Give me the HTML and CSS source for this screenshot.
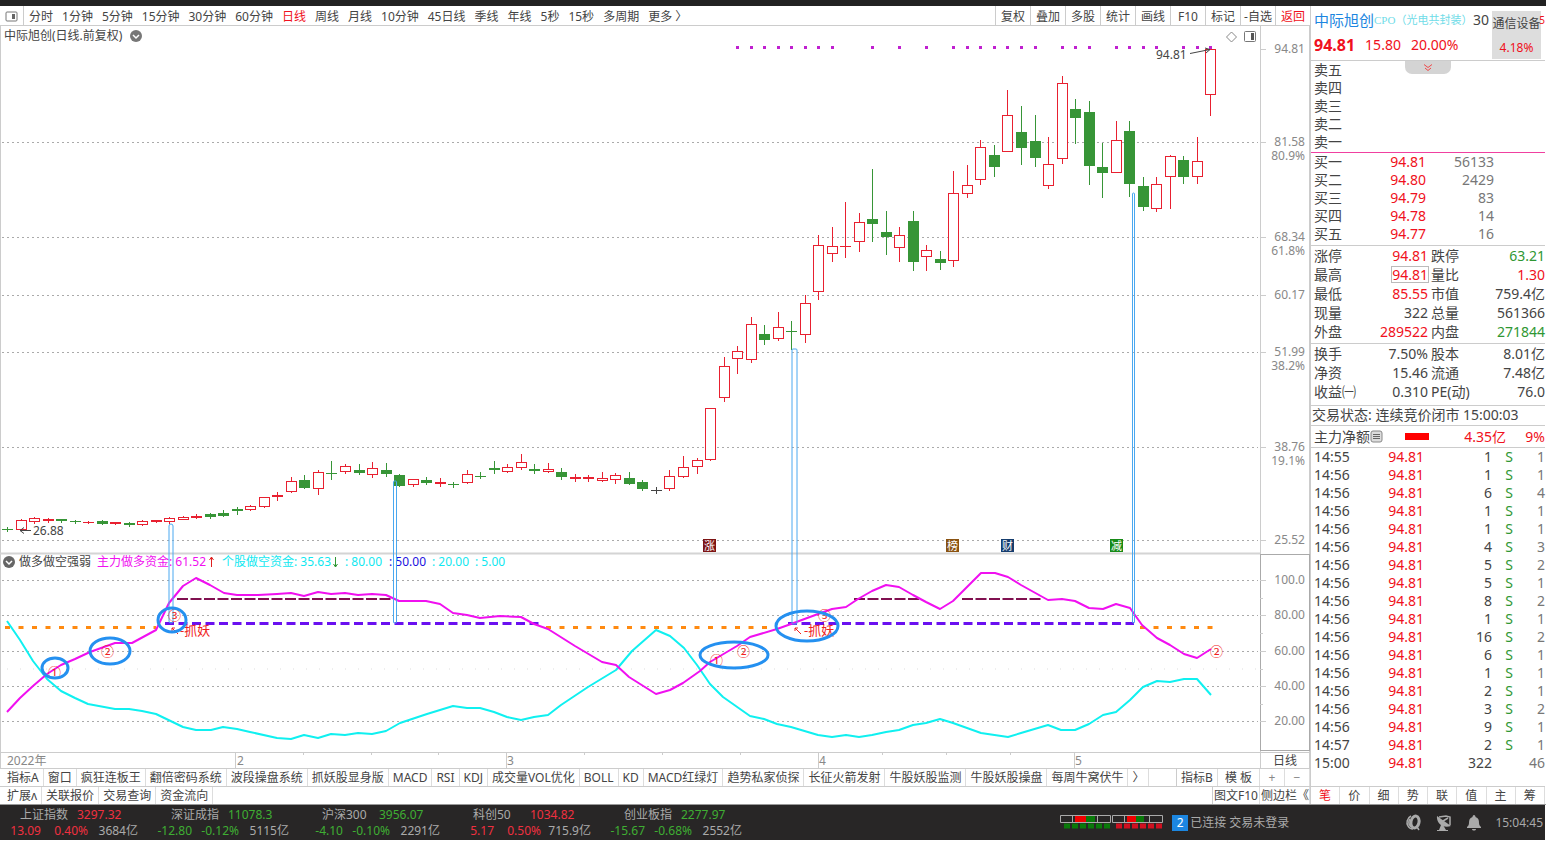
FILE: index.html
```html
<!DOCTYPE html>
<html lang="zh-CN">
<head>
    <meta charset="UTF-8">
    <meta name="viewport" content="width=device-width, initial-scale=1.0">
    <title>中际旭创 日线</title>
    <link rel="stylesheet" href="styles.css">
</head>
<body>
    <div class="workspace">
        <main class="chart-pane">
            <nav class="toolbar">
                <button class="layout-btn" aria-label="布局">
                    <svg width="13" height="11" viewBox="0 0 13 11"><rect x="1" y="1" width="11" height="9" rx="1" fill="none" stroke="#777"/><rect x="7" y="3" width="3" height="5" fill="#666"/></svg>
                </button>
                <div class="periods">
                    <button>分时</button>
                    <button>1分钟</button>
                    <button>5分钟</button>
                    <button>15分钟</button>
                    <button>30分钟</button>
                    <button>60分钟</button>
                    <button class="active">日线</button>
                    <button>周线</button>
                    <button>月线</button>
                    <button>10分钟</button>
                    <button>45日线</button>
                    <button>季线</button>
                    <button>年线</button>
                    <button>5秒</button>
                    <button>15秒</button>
                    <button>多周期</button>
                    <button>更多 〉</button>
                </div>
                <div class="tools">
                    <button>复权</button>
                    <button>叠加</button>
                    <button>多股</button>
                    <button>统计</button>
                    <button>画线</button>
                    <button>F10</button>
                    <button>标记</button>
                    <button>-自选</button>
                    <button class="active">返回</button>
                </div>
            </nav>

            <svg class="chart" id="chart" viewBox="0 26 1310 742">
                <g class="grid">
                    <path d="M2 142.5H1258M2 237.5H1258M2 295.5H1258M2 352.5H1258M2 447.5H1258M2 540.5H1258"/>
                    <path d="M2 580.5H1258M2 615.5H1258M2 651.5H1258M2 686.5H1258M2 721.5H1258"/>
                </g>
                <path class="grid-mid" d="M7 669H1258"/>
                <path class="frame" d="M0.5 26V768M1260.5 26V768M0 752.5H1310M1309.5 26V768"/>
                <path class="divider" d="M0 553.5H1260"/>
                <rect class="axis-box" x="1260.5" y="554.5" width="49" height="196"/>
                <path class="ticks" d="M1260 49.5h6M1260 142.5h6M1260 237.5h6M1260 295.5h6M1260 352.5h6M1260 447.5h6M1260 540.5h6M1260 580.5h6M1260 615.5h6M1260 651.5h6M1260 686.5h6M1260 721.5h6M1260 598.5h3M1260 633.5h3M1260 669.5h3M1260 704.5h3"/>
                <path class="ticks" d="M235.5 752v16M506.5 752v16M818.5 752v16M1074.5 752v16M303.5 752v3M371.5 752v3M438.5 752v3M584.5 752v3M662.5 752v3M740.5 752v3M882.5 752v3M946.5 752v3M1010.5 752v3"/>

                <g class="axis-text">
                    <text x="1305" y="53">94.81</text>
                    <text x="1305" y="146">81.58</text>
                    <text x="1305" y="160">80.9%</text>
                    <text x="1305" y="241">68.34</text>
                    <text x="1305" y="255">61.8%</text>
                    <text x="1305" y="299">60.17</text>
                    <text x="1305" y="356">51.99</text>
                    <text x="1305" y="370">38.2%</text>
                    <text x="1305" y="451">38.76</text>
                    <text x="1305" y="465">19.1%</text>
                    <text x="1305" y="544">25.52</text>
                    <text x="1305" y="584">100.0</text>
                    <text x="1305" y="619">80.00</text>
                    <text x="1305" y="655">60.00</text>
                    <text x="1305" y="690">40.00</text>
                    <text x="1305" y="725">20.00</text>
                </g>
                <g class="month-text">
                    <text x="7" y="765">2022年</text>
                    <text x="237" y="765">2</text>
                    <text x="507" y="765">3</text>
                    <text x="819" y="765">4</text>
                    <text x="1075" y="765">5</text>
                </g>
                <text class="dark" x="1273" y="765">日线</text>

                <text class="dark" x="4" y="40">中际旭创(日线.前复权)</text>
                <circle cx="136" cy="36" r="6" fill="#777"/>
                <path d="M133 35l3 3 3-3" fill="none" stroke="#fff" stroke-width="1.5"/>
                <path d="M1231.5 32l5 5-5 5-5-5z" fill="none" stroke="#888"/>
                <rect x="1244.5" y="31.5" width="11" height="10" rx="1" fill="none" stroke="#777"/>
                <rect x="1251" y="33" width="3" height="7" fill="#555"/>

                <g id="signals"></g>
                <g id="candles"></g>

                <text class="price-mark" x="33" y="535">26.88</text>
                <path class="arrow" d="M31 530.5H20M24 527.5l-4 3 4 3"/>
                <text class="price-mark" x="1156" y="59">94.81</text>
                <path class="arrow" d="M1190 53.5L1210 49.5M1205 48l5 1.500-4 3.500"/>

                <g class="event">
                    <rect x="703" y="539" width="13" height="13" fill="#7d1414"/><text x="709.5" y="550">涨</text>
                    <rect x="946" y="539" width="13" height="13" fill="#8a5312"/><text x="952.5" y="550">榜</text>
                    <rect x="1001" y="539" width="13" height="13" fill="#163d6e"/><text x="1007.5" y="550">财</text>
                    <rect x="1110" y="539" width="13" height="13" fill="#178a17"/><text x="1116.5" y="550">减</text>
                </g>

                <circle cx="9" cy="562" r="6" fill="#666"/>
                <path d="M6 561l3 3 3-3" fill="none" stroke="#fff" stroke-width="1.5"/>
                <text class="dark" x="19" y="566">做多做空强弱</text>
                <text class="long" x="97" y="566">主力做多资金: 61.52</text>
                <path d="M211.500 567V557M209.500 560l2-3 2 3" fill="none" stroke="#e02020"/>
                <text class="short" x="222" y="566">个股做空资金: 35.63</text>
                <path d="M335.500 557v10M333.500 564l2 3 2-3" fill="none" stroke="#2f9733"/>
                <text class="short" x="345" y="566">: 80.00</text>
                <text class="mid" x="389" y="566">: 50.00</text>
                <text class="short" x="432" y="566">: 20.00</text>
                <text class="short" x="475" y="566">: 5.00</text>

                <path class="dash-orange" d="M5 627.500H156M546 627.500H770M1140 627.500H1215"/>
                <path class="dash-purple" d="M165 623.500H541M788 623.500H1134"/>
                <path class="dash-wine" d="M177 599H391M854 599H920M962 599H1041"/>
                <polyline class="line-short" points="7,621 20,640 33,661 47,679 61,691 75,698 88,704 115,709 129,709 142,711 156,714 183,727 196,730 211,730 223,727 237,729 250,732 277,738 291,739 304,735 318,738 331,734 345,735 358,733 372,734 386,731 400,723 427,714 453,706 467,708 480,708 494,712 507,717 521,720 534,717 548,715 561,705 588,687 616,670 632,651 656,630 670,636 684,648 697,665 710,684 723,697 750,716 764,719 777,724 791,727 818,735 832,737 846,735 859,737 872,735 886,732 899,730 913,725 926,723 940,719 953,723 967,728 981,733 1008,737 1021,733 1048,725 1061,730 1075,730 1089,724 1103,715 1116,712 1130,700 1143,687 1157,681 1170,682 1184,679 1197,679 1211,695"/>
                <polyline class="line-long" points="7,712 20,698 33,686 47,674 61,665 75,659 90,652 115,643 132,643 156,630 169,603 183,586 196,578 210,585 224,593 237,595 258,595 277,594 291,593 304,596 318,592 331,594 345,593 358,595 372,594 386,595 399,601 426,601 440,604 453,613 467,615 480,618 500,616 521,617 534,624 548,629 575,646 602,662 616,665 629,677 656,694 670,690 683,683 700,671 710,662 737,646 750,637 777,629 791,624 818,614 832,609 846,607 858,599 872,591 886,585 899,587 913,595 926,602 940,609 953,601 967,587 981,573 995,573 1008,577 1021,585 1048,600 1062,599 1075,601 1089,608 1103,609 1116,604 1130,608 1142,625 1157,638 1170,645 1184,654 1197,658 1211,649"/>

                <g class="pins">
                    <rect x="169" y="524" width="4" height="99" rx="2"/>
                    <rect x="393.500" y="481" width="3" height="142" rx="1"/>
                    <rect x="792" y="349" width="5" height="275" rx="1"/>
                    <rect x="1132.500" y="193" width="2" height="430" rx="1"/>
                </g>
                <g class="signal-text">
                    <text x="48" y="677">①</text>
                    <text x="101" y="656">②</text>
                    <text x="168" y="620">③</text>
                    <text x="180" y="635">-抓妖</text>
                    <text x="710" y="665">①</text>
                    <text x="737" y="656">②</text>
                    <text x="818" y="620">③</text>
                    <text x="804" y="635">-抓妖</text>
                    <text x="1210" y="656">②</text>
                </g>
                <path class="signal-arrow" d="M178 634l-6-6M172 631v-3h3M801 634l-6-6M795 631v-3h3"/>
                <g class="rings">
                    <ellipse cx="55" cy="668" rx="13" ry="10"/>
                    <ellipse cx="110" cy="651" rx="20" ry="13"/>
                    <ellipse cx="172" cy="620" rx="14" ry="12"/>
                    <ellipse cx="734" cy="655" rx="34" ry="13"/>
                    <ellipse cx="807" cy="626" rx="31" ry="15"/>
                </g>
            </svg>

            <div class="tab-row">
                <button>指标A</button>
                <button>窗口</button>
                <button>疯狂连板王</button>
                <button>翻倍密码系统</button>
                <button>波段操盘系统</button>
                <button>抓妖股显身版</button>
                <button>MACD</button>
                <button>RSI</button>
                <button>KDJ</button>
                <button>成交量VOL优化</button>
                <button>BOLL</button>
                <button>KD</button>
                <button>MACD红绿灯</button>
                <button>趋势私家侦探</button>
                <button>长征火箭发射</button>
                <button>牛股妖股监测</button>
                <button>牛股妖股操盘</button>
                <button>每周牛窝伏牛</button>
                <button>〉</button>
                <span class="spacer"></span>
                <button>指标B</button>
                <button class="template">模 板</button>
                <button class="zoom-btn">+</button>
                <button class="zoom-btn">−</button>
            </div>
            <div class="tab-row">
                <button>扩展ʌ</button>
                <button>关联报价</button>
                <button>交易查询</button>
                <button>资金流向</button>
                <span class="spacer"></span>
                <button class="slim">图文F10</button>
                <button class="side-toggle">侧边栏《</button>
            </div>
        </main>

        <aside class="quote">
            <header class="quote-head">
                <div class="quote-main">
                    <div class="name-line">
                        <a class="stock-name" href="#">中际旭创</a><span class="concept">CPO（光电共封装）</span><span class="code">30</span>
                    </div>
                    <div class="price-line">
                        <strong>94.81</strong><span>15.80</span><span>20.00%</span>
                    </div>
                </div>
                <div class="sector"><span>通信设备</span><span class="up">4.18%</span></div>
                <span class="code-tail">5</span>
                <button class="collapse" aria-label="收起">
                    <svg width="10" height="8" viewBox="0 0 10 8"><path d="M1 0.500l4 3 4-3M2 4l3 2.500 3-2.500" fill="none" stroke="#f04848"/></svg>
                </button>
            </header>

            <table class="book sell">
                <tr><th>卖五</th><td></td><td></td></tr>
                <tr><th>卖四</th><td></td><td></td></tr>
                <tr><th>卖三</th><td></td><td></td></tr>
                <tr><th>卖二</th><td></td><td></td></tr>
                <tr><th>卖一</th><td></td><td></td></tr>
            </table>
            <table class="book buy">
                <tr><th>买一</th><td class="up">94.81</td><td class="vol">56133</td></tr>
                <tr><th>买二</th><td class="up">94.80</td><td class="vol">2429</td></tr>
                <tr><th>买三</th><td class="up">94.79</td><td class="vol">83</td></tr>
                <tr><th>买四</th><td class="up">94.78</td><td class="vol">14</td></tr>
                <tr><th>买五</th><td class="up">94.77</td><td class="vol">16</td></tr>
            </table>
            <table class="stats">
                <tr><th>涨停</th><td class="up">94.81</td><th>跌停</th><td class="down">63.21</td></tr>
                <tr><th>最高</th><td class="up"><span class="boxed">94.81</span></td><th>量比</th><td class="up">1.30</td></tr>
                <tr><th>最低</th><td class="up">85.55</td><th>市值</th><td>759.4亿</td></tr>
                <tr><th>现量</th><td>322</td><th>总量</th><td>561366</td></tr>
                <tr><th>外盘</th><td class="up">289522</td><th>内盘</th><td class="down">271844</td></tr>
            </table>
            <table class="stats finance">
                <tr><th>换手</th><td>7.50%</td><th>股本</th><td>8.01亿</td></tr>
                <tr><th>净资</th><td>15.46</td><th>流通</th><td>7.48亿</td></tr>
                <tr><th>收益㈠</th><td>0.310</td><th>PE(动)</th><td>76.0</td></tr>
            </table>
            <p class="session">交易状态: 连续竞价闭市 15:00:03</p>
            <div class="net-flow">
                <span>主力净额</span>
                <svg width="13" height="13" viewBox="0 0 13 13"><rect x="1" y="1" width="11" height="11" rx="2" fill="#ddd" stroke="#888"/><path d="M3 4.500h7M3 6.500h7M3 8.500h7" stroke="#666"/></svg>
                <span class="flow-bar"></span>
                <span class="flow-value">4.35亿</span>
                <span class="flow-pct">9%</span>
            </div>
            <table class="trades">
                <tr><th>14:55</th><td class="up">94.81</td><td>1</td><td class="down">S</td><td class="vol">1</td></tr>
                <tr><th>14:56</th><td class="up">94.81</td><td>1</td><td class="down">S</td><td class="vol">1</td></tr>
                <tr><th>14:56</th><td class="up">94.81</td><td>6</td><td class="down">S</td><td class="vol">4</td></tr>
                <tr><th>14:56</th><td class="up">94.81</td><td>1</td><td class="down">S</td><td class="vol">1</td></tr>
                <tr><th>14:56</th><td class="up">94.81</td><td>1</td><td class="down">S</td><td class="vol">1</td></tr>
                <tr><th>14:56</th><td class="up">94.81</td><td>4</td><td class="down">S</td><td class="vol">3</td></tr>
                <tr><th>14:56</th><td class="up">94.81</td><td>5</td><td class="down">S</td><td class="vol">2</td></tr>
                <tr><th>14:56</th><td class="up">94.81</td><td>5</td><td class="down">S</td><td class="vol">1</td></tr>
                <tr><th>14:56</th><td class="up">94.81</td><td>8</td><td class="down">S</td><td class="vol">2</td></tr>
                <tr><th>14:56</th><td class="up">94.81</td><td>1</td><td class="down">S</td><td class="vol">1</td></tr>
                <tr><th>14:56</th><td class="up">94.81</td><td>16</td><td class="down">S</td><td class="vol">2</td></tr>
                <tr><th>14:56</th><td class="up">94.81</td><td>6</td><td class="down">S</td><td class="vol">1</td></tr>
                <tr><th>14:56</th><td class="up">94.81</td><td>1</td><td class="down">S</td><td class="vol">1</td></tr>
                <tr><th>14:56</th><td class="up">94.81</td><td>2</td><td class="down">S</td><td class="vol">1</td></tr>
                <tr><th>14:56</th><td class="up">94.81</td><td>3</td><td class="down">S</td><td class="vol">2</td></tr>
                <tr><th>14:56</th><td class="up">94.81</td><td>9</td><td class="down">S</td><td class="vol">1</td></tr>
                <tr><th>14:57</th><td class="up">94.81</td><td>2</td><td class="down">S</td><td class="vol">1</td></tr>
                <tr><th>15:00</th><td class="up">94.81</td><td>322</td><td></td><td class="vol">46</td></tr>
            </table>
            <nav class="quote-tabs">
                <button class="active">笔</button>
                <button>价</button>
                <button>细</button>
                <button>势</button>
                <button>联</button>
                <button>值</button>
                <button>主</button>
                <button>筹</button>
            </nav>
        </aside>
    </div>

    <footer class="status">
        <div class="index up">
            <div class="index-top"><span class="label">上证指数</span><span>3297.32</span></div>
            <div class="index-bottom"><span>13.09</span><span>0.40%</span><span class="label">3684亿</span></div>
        </div>
        <div class="index down">
            <div class="index-top"><span class="label">深证成指</span><span>11078.3</span></div>
            <div class="index-bottom"><span>-12.80</span><span>-0.12%</span><span class="label">5115亿</span></div>
        </div>
        <div class="index down">
            <div class="index-top"><span class="label">沪深300</span><span>3956.07</span></div>
            <div class="index-bottom"><span>-4.10</span><span>-0.10%</span><span class="label">2291亿</span></div>
        </div>
        <div class="index up">
            <div class="index-top"><span class="label">科创50</span><span>1034.82</span></div>
            <div class="index-bottom"><span>5.17</span><span>0.50%</span><span class="label">715.9亿</span></div>
        </div>
        <div class="index down">
            <div class="index-top"><span class="label">创业板指</span><span>2277.97</span></div>
            <div class="index-bottom"><span>-15.67</span><span>-0.68%</span><span class="label">2552亿</span></div>
        </div>
        <div class="status-right">
            <svg width="104" height="16" viewBox="0 0 104 16">
                <path d="M15 1h11v6H15zM67 1h9v6H67z" fill="#f00000"/>
                <path d="M26 1h9v6H26zM76 1h8v6H76z" fill="#0a7a0a"/>
                <path d="M0.500 0.500h50v7H0.500zM12.500 0.500v7M37.500 0.500v7M52.500 0.500h50v7H52.500zM64.500 0.500v7M89.500 0.500v7" fill="none" stroke="#aaa"/>
                <path d="M4 11H51" stroke="#0a7a0a" stroke-width="5" stroke-dasharray="6 2"/>
                <path d="M56 11H103" stroke="#d01020" stroke-width="5" stroke-dasharray="6 2"/>
            </svg>
            <span class="badge">2</span>
            <span class="label">已连接 交易未登录</span>
        </div>
        <div class="status-icons">
            <svg width="18" height="18" viewBox="0 0 18 18" fill="none" stroke="#aaa"><ellipse cx="10" cy="8" rx="4" ry="6" stroke-width="3" transform="rotate(12 10 8)"/><path d="M6 2C2 4 1 9 3 12c1 2 3 3 5 3M5 5c-2 3-1 6 1 8M12 13l2 3" stroke-width="1.500"/></svg>
            <svg width="18" height="18" viewBox="0 0 18 18"><path d="M2 2c-1 7 6 13 14 10z" fill="#aaa"/><path d="M6 11l-2 5h7l-3-5zM2 16h11v1H2z" fill="#aaa"/><path d="M8 7l5-3M4 3l7-1 4 1v8" stroke="#aaa" stroke-width="1.500" fill="none"/></svg>
            <svg width="18" height="18" viewBox="0 0 18 18"><path d="M9 1c1 0 1.500 1 1.500 2 3 1 3.500 3 3.500 6 0 2 1 3 2 4v1H2v-1c1-1 2-2 2-4 0-3 .5-5 3.500-6C7.500 2 8 1 9 1zM7 15h4c0 2-4 2-4 0z" fill="#aaa"/></svg>
        </div>
        <time class="label">15:04:45</time>
    </footer>

    <script src="script.js"></script>
</body>
</html>
```

FILE: styles.css
```css
body {
    margin: 0;
    background: #fff;
    border-top: 6px solid #222;
    box-sizing: border-box;
    min-height: 100vh;
    font-family: "Noto Sans", "Noto Sans CJK SC", sans-serif;
    font-size: 12px;
    line-height: 16px;
    color: #444;
}
button {
    margin: 0;
    padding: 0;
    border: 0;
    background: none;
    font: inherit;
    color: inherit;
    white-space: nowrap;
}
.up {
    color: #f01020;
}
.down {
    color: #2f9733;
}

.workspace {
    display: grid;
    grid-template-columns: minmax(0, 1fr) 235px;
    padding-right: 1px;
    border-bottom: 1px solid #999;
}
.chart-pane {
    display: flex;
    flex-direction: column;
}

/* period toolbar */
.toolbar {
    display: flex;
    height: 20px;
    box-sizing: border-box;
    border-bottom: 1px solid #ccc;
}
.toolbar button {
    padding-top: 2px;
}
.layout-btn {
    width: 24px;
    display: flex;
    align-items: center;
    justify-content: center;
    border-right: 1px solid #ccc;
}
.periods {
    display: flex;
    flex: 1;
    gap: 9px;
    padding-left: 5px;
}
.tools {
    display: flex;
}
.tools button {
    width: 35px;
    box-sizing: border-box;
    border-left: 1px solid #ccc;
}
.active {
    color: #f01020;
}

/* chart */
.chart {
    display: block;
    width: 100%;
    font-size: 12px;
}
.grid path {
    stroke: #aaa;
    stroke-dasharray: 2 3;
}
.grid-mid {
    stroke: #ddd;
    stroke-dasharray: 1 12;
}
.frame, .ticks {
    stroke: #ccc;
    fill: none;
}
.divider {
    stroke: #d4d4d4;
    stroke-width: 2;
}
.axis-box {
    fill: none;
    stroke: #aaa;
}
.axis-text {
    text-anchor: end;
    fill: #888;
}
.month-text {
    fill: #888;
}
.dark {
    fill: #444;
}
.price-mark {
    fill: #444;
}
.arrow {
    fill: none;
    stroke: #444;
}
.event text {
    fill: #fff;
    font-size: 11px;
    text-anchor: middle;
}
.long {
    fill: #f010f0;
}
.short {
    fill: #10e8f0;
}
.mid {
    fill: #2010e0;
}
.line-long, .line-short {
    fill: none;
    stroke: #f010f0;
    stroke-width: 2;
    stroke-linejoin: round;
}
.line-short {
    stroke: #10f0f0;
}
.dash-orange {
    stroke: #ff8a10;
    stroke-width: 3;
    stroke-dasharray: 5 8.5;
}
.dash-purple {
    stroke: #6a10f0;
    stroke-width: 3;
    stroke-dasharray: 9 4.5;
}
.dash-wine {
    stroke: #801050;
    stroke-width: 2;
    stroke-dasharray: 11 2.5;
}
.pins rect {
    fill: none;
    stroke: #4aa8f0;
}
.rings ellipse {
    fill: none;
    stroke: #2490f0;
    stroke-width: 3;
}
.signal-text {
    fill: #f02020;
    font-size: 13px;
}
.signal-arrow {
    fill: none;
    stroke: #f02020;
}
.candle-up {
    fill: #fff;
    stroke: #e82030;
}
.candle-down {
    fill: #379537;
    stroke: #379537;
}
.candle-flat {
    stroke: #444;
}
.signal-dot {
    fill: #c020d0;
}

/* indicator tabs */
.tab-row {
    display: flex;
    height: 18px;
    box-sizing: border-box;
    border-top: 1px solid #ccc;
    padding-left: 3px;
}
.tab-row button {
    padding: 0 4px;
    border-right: 1px solid #ddd;
}
.tab-row .spacer {
    flex: 1;
    border-right: 1px solid #ccc;
}
.tab-row .template {
    padding: 0 7px;
}
.tab-row .zoom-btn {
    width: 25px;
    box-sizing: border-box;
    color: #888;
}
.tab-row .slim {
    padding: 0 1px;
}
.tab-row .side-toggle {
    width: 50px;
    box-sizing: border-box;
    padding: 0 1px;
    text-align: left;
}

/* quote panel */
.quote {
    display: flex;
    flex-direction: column;
    border-left: 1px solid #ccc;
    font-size: 14px;
    line-height: 18px;
}
.quote-head {
    position: relative;
    display: flex;
    height: 55px;
    border-bottom: 1px solid #ccc;
    box-sizing: border-box;
    padding-left: 3px;
}
.quote-main {
    flex: 1;
    min-width: 0;
}
.name-line {
    display: flex;
    height: 28px;
    align-items: center;
    white-space: nowrap;
}
.stock-name {
    color: #1c86e0;
    font-size: 15px;
    text-decoration: none;
}
.concept {
    width: 99px;
    color: #6fdce8;
    font-family: "Liberation Serif", "Noto Sans CJK SC", serif;
    font-size: 11px;
}
.price-line {
    display: flex;
    gap: 10px;
    align-items: center;
    line-height: 22px;
    color: #f01020;
}
.price-line strong {
    font-size: 16px;
}
.sector {
    display: flex;
    flex-direction: column;
    gap: 6px;
    width: 49px;
    margin: 5px 4px 1px 0;
    padding-top: 4px;
    box-sizing: border-box;
    background: #ddd;
    font-size: 12px;
    text-align: center;
    white-space: nowrap;
}
.code-tail {
    position: absolute;
    right: 0;
    top: 5px;
    font-size: 10px;
    color: #f01020;
}
.collapse {
    position: absolute;
    top: 55px;
    left: 94px;
    width: 46px;
    height: 13px;
    display: flex;
    align-items: center;
    justify-content: center;
    background: #d4d4d4;
    border-radius: 0 0 7px 7px;
}
.quote table {
    border-collapse: separate;
    border-spacing: 0;
    table-layout: fixed;
    width: 100%;
}
.quote th, .quote td {
    padding: 0;
    height: 18px;
    font-weight: normal;
    text-align: right;
    white-space: nowrap;
}
.quote th {
    text-align: left;
    padding-left: 3px;
}
.quote .vol {
    color: #777;
}
.sell {
    padding-bottom: 1px;
    border-bottom: 1px solid #f040a0;
}
.book th {
    width: 47px;
}
.book td:nth-child(2) {
    width: 65px;
}
.quote .book td:nth-child(3) {
    padding-right: 51px;
}
.buy, .stats {
    padding-bottom: 2px;
    border-bottom: 1px solid #ccc;
}
.quote .stats th, .quote .stats td {
    height: 19px;
}
.stats td {
    width: 64px;
}
.finance {
    padding-bottom: 4px;
}
.boxed {
    display: inline-block;
    line-height: 15px;
    outline: 1px solid #bbb;
}
.session {
    margin: 0;
    padding-left: 1px;
    height: 19px;
    border-bottom: 1px solid #ccc;
}
.net-flow {
    display: flex;
    align-items: center;
    height: 21px;
    padding-left: 3px;
    border-bottom: 1px solid #ccc;
    color: #f01020;
}
.net-flow span:first-child {
    color: #444;
}
.flow-bar {
    width: 24px;
    height: 7px;
    margin-left: 22px;
    background: #f00;
}
.flow-value {
    flex: 1;
    text-align: right;
}
.flow-pct {
    width: 39px;
    text-align: right;
}
.trades th {
    width: 50px;
}
.trades td:nth-child(2) {
    width: 60px;
}
.trades td:nth-child(4) {
    width: 21px;
}
.trades td:nth-child(5) {
    width: 32px;
}
.quote-tabs {
    display: grid;
    grid-template-columns: repeat(8, 1fr);
    height: 18px;
    box-sizing: border-box;
    margin-top: auto;
    border-top: 1px solid #ccc;
    font-size: 12px;
    line-height: 16px;
}
.quote-tabs button {
    border-right: 1px solid #ddd;
}

/* status bar */
.status {
    display: flex;
    align-items: center;
    height: 35px;
    margin-right: 1px;
    background: #282626;
}
.status .label {
    color: #aaa;
}
.status time {
    padding-right: 2px;
}
.index {
    width: 151px;
}
.index.up {
    color: #f03040;
}
.index.down {
    color: #3fae33;
}
.index-top {
    display: grid;
    grid-template-columns: 57px 1fr;
    padding-left: 20px;
}
.index-bottom {
    display: grid;
    grid-template-columns: 41px 47px 50px;
    text-align: right;
}
.status-right {
    display: flex;
    flex: 1;
    align-items: center;
    justify-content: flex-end;
    gap: 2px;
}
.badge {
    width: 16px;
    margin-left: 6px;
    background: #1c86e0;
    color: #fff;
    text-align: center;
}
.status-icons {
    display: flex;
    gap: 12px;
    margin: 0 12px 0 116px;
}
```

FILE: script.js
```js
// [high, body top, body bottom, low, type]
// r = hollow red, f = solid red, g = green, n = unchanged
const candles = [
    [527, 529, 529, 531, 'g'], [519, 520, 529, 530, 'r'], [517, 518, 521, 523, 'r'],
    [518, 519, 520, 522, 'f'], [519, 519, 520, 522, 'g'], [520, 521, 521, 523, 'g'],
    [521, 522, 522, 523, 'f'], [520, 521, 523, 524, 'g'], [522, 522, 523, 524, 'f'],
    [522, 523, 524, 526, 'g'], [520, 521, 524, 525, 'r'], [520, 520, 521, 522, 'f'],
    [517, 518, 521, 523, 'r'], [516, 517, 519, 519, 'r'], [514, 516, 517, 518, 'f'],
    [513, 514, 516, 518, 'g'], [510, 513, 515, 516, 'g'], [507, 509, 510, 514, 'g'],
    [505, 506, 509, 510, 'r'], [497, 497, 506, 507, 'r'], [492, 495, 496, 500, 'f'],
    [477, 481, 491, 492, 'r'], [475, 480, 487, 488, 'g'], [470, 472, 488, 494, 'r'],
    [461, 473, 473, 479, 'g'], [464, 466, 471, 473, 'r'], [464, 470, 472, 474, 'g'],
    [462, 468, 474, 477, 'r'], [463, 470, 473, 476, 'g'], [474, 475, 485, 486, 'g'],
    [479, 479, 484, 486, 'r'], [477, 480, 482, 484, 'g'], [478, 482, 483, 486, 'f'],
    [482, 484, 484, 487, 'g'], [470, 474, 482, 483, 'r'], [472, 476, 476, 478, 'g'],
    [461, 468, 469, 473, 'g'], [464, 467, 471, 472, 'r'], [454, 462, 467, 469, 'r'],
    [464, 469, 470, 473, 'g'], [463, 469, 471, 472, 'r'], [468, 472, 476, 479, 'g'],
    [474, 477, 478, 481, 'f'], [475, 477, 478, 481, 'f'], [472, 478, 480, 481, 'r'],
    [473, 475, 479, 483, 'r'], [472, 478, 483, 484, 'g'], [480, 482, 488, 490, 'g'],
    [487, 490, 490, 493, 'n'], [470, 476, 488, 490, 'r'], [456, 467, 476, 477, 'r'],
    [458, 460, 466, 473, 'r'], [408, 408, 459, 460, 'r'], [357, 366, 397, 401, 'r'],
    [346, 351, 358, 373, 'r'], [317, 324, 359, 362, 'r'], [325, 334, 339, 344, 'g'],
    [312, 327, 338, 340, 'r'], [321, 331, 331, 349, 'g'], [295, 303, 334, 342, 'r'],
    [235, 245, 291, 299, 'r'], [227, 246, 253, 261, 'r'], [202, 246, 246, 257, 'f'],
    [213, 222, 241, 251, 'r'], [169, 219, 223, 241, 'g'], [211, 232, 236, 254, 'g'],
    [227, 235, 247, 261, 'r'], [211, 221, 261, 270, 'g'], [245, 250, 256, 270, 'r'],
    [251, 259, 262, 269, 'g'], [171, 193, 260, 266, 'r'], [165, 185, 193, 197, 'r'],
    [140, 147, 179, 184, 'r'], [145, 155, 166, 176, 'g'], [90, 115, 151, 151, 'r'],
    [106, 132, 147, 164, 'g'], [115, 141, 157, 166, 'g'], [137, 164, 185, 188, 'r'],
    [76, 83, 158, 163, 'r'], [99, 109, 117, 143, 'g'], [101, 112, 165, 184, 'g'],
    [143, 167, 172, 197, 'g'], [121, 140, 172, 172, 'r'], [121, 131, 183, 196, 'g'],
    [177, 186, 206, 210, 'g'], [177, 184, 208, 211, 'r'], [155, 156, 176, 208, 'r'],
    [156, 160, 176, 183, 'g'], [137, 161, 176, 183, 'r'], [49, 49, 94, 115, 'r']
];
const signalDays = [54, 55, 56, 57, 58, 59, 60, 61, 64, 66, 68, 70, 71, 72, 73, 74, 75, 76,
    78, 79, 80, 82, 83, 84, 85, 87, 88, 89];
const classes = { r: 'candle-up', f: 'candle-up', g: 'candle-down', n: 'candle-flat' };

function dayX(i) {
    return Math.round(7 + i * 13.52) + 0.5;
}

document.getElementById('candles').innerHTML = candles.map(([high, top, bottom, low, type], i) => {
    const x = dayX(i);
    const wick = `<path class="${classes[type]}" d="M${x} ${high}V${low + 1}"/>`;
    if (top === bottom || type === 'f') {
        let marks = '';
        for (let y = top; y <= bottom; y++) {
            marks += `<path class="${classes[type]}" d="M${x - 5.5} ${y + 0.5}h11"/>`;
        }
        return wick + marks;
    }
    return wick + `<rect class="${classes[type]}" x="${x - 5}" y="${top + 0.5}" width="10" height="${bottom - top}"/>`;
}).join('');

document.getElementById('signals').innerHTML = signalDays.map(i =>
    `<rect class="signal-dot" x="${dayX(i) - 1.5}" y="46" width="3" height="3"/>`
).join('');
```
